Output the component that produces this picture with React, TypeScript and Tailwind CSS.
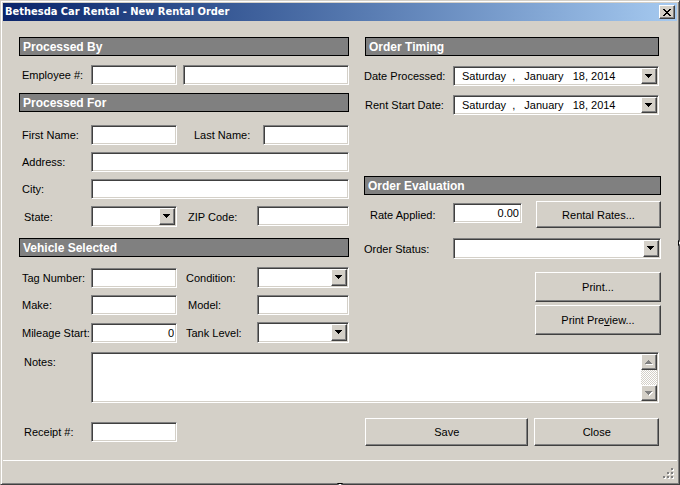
import { useState } from 'react';
import type { InputHTMLAttributes, ButtonHTMLAttributes, ReactNode } from 'react';

const sunken =
  'border border-t-[#808080] border-l-[#808080] border-r-white border-b-white bg-white shadow-[inset_1px_1px_0_#404040,inset_-1px_-1px_0_#d4d0c8]';
const raised =
  'border border-t-white border-l-white border-r-[#404040] border-b-[#404040] bg-[#d4d0c8] shadow-[inset_-1px_-1px_0_#808080]';

function SectionHeader({ children }: { children: ReactNode }) {
  return (
    <h2 className="h-[19px] border border-black bg-[#808080] pl-[3px] text-[12px] leading-[18px] font-bold text-white">
      {children}
    </h2>
  );
}

function Label({ id, className = '', children }: { id: string; className?: string; children: ReactNode }) {
  return (
    <label htmlFor={id} className={`self-center whitespace-nowrap ${className}`}>
      {children}
    </label>
  );
}

function TextField({ className = '', ...props }: InputHTMLAttributes<HTMLInputElement>) {
  return <input type="text" className={`h-5 w-full min-w-0 px-[2px] outline-none ${sunken} ${className}`} {...props} />;
}

function Arrow({ up = false, disabled = false }: { up?: boolean; disabled?: boolean }) {
  return (
    <svg width="8" height="5" viewBox="0 0 8 5" shapeRendering="crispEdges">
      {disabled && <path d={up ? 'M1 4h7v1H1z' : 'M1 1h7v1H7v1H6v1H5v1H4V4H3V3H2V2H1z'} fill="#fff" />}
      <path
        d={up ? 'M3 0h1v1h1v1h1v1h1v1H0V3h1V2h1V1h1z' : 'M0 0h7v1H6v1H5v1H4v1H3V3H2V2H1V1H0z'}
        fill={disabled ? '#808080' : '#000'}
      />
    </svg>
  );
}

function ComboBox({ id, options }: { id: string; options: string[] }) {
  return (
    <div className="relative h-[21px] min-w-0">
      <select id={id} defaultValue="" className={`h-full w-full appearance-none px-[3px] outline-none ${sunken}`}>
        <option value=""></option>
        {options.map((option) => (
          <option key={option}>{option}</option>
        ))}
      </select>
      <span
        className={`pointer-events-none absolute top-[2px] right-[2px] bottom-[2px] flex w-4 items-center justify-center ${raised}`}
      >
        <Arrow />
      </span>
    </div>
  );
}

function DatePicker({ id }: { id: string }) {
  const [date, setDate] = useState('Saturday  ,   January   18, 2014');
  return (
    <div className={`flex h-5 min-w-0 p-px ${sunken}`}>
      <input
        id={id}
        type="text"
        value={date}
        onChange={(e) => setDate(e.target.value)}
        className="min-w-0 flex-1 bg-transparent pl-[7px] outline-none"
      />
      <button type="button" aria-label="Open calendar" className={`flex w-4 items-center justify-center ${raised}`}>
        <Arrow />
      </button>
    </div>
  );
}

function PushButton({ className = '', children, ...props }: ButtonHTMLAttributes<HTMLButtonElement>) {
  return (
    <button type="button" className={`text-center ${raised} ${className}`} {...props}>
      {children}
    </button>
  );
}

export default function App() {
  return (
    <div className="relative flex min-h-screen flex-col border border-t-[#d4d0c8] border-l-[#d4d0c8] border-r-[#404040] border-b-[#404040] bg-[#d4d0c8] p-[2px] font-['Liberation_Sans',sans-serif] text-[11px] leading-[16px] text-black shadow-[inset_1px_1px_0_#fff,inset_-1px_-1px_0_#808080]">
      {/* Title bar */}
      <header className="flex h-[18px] items-center justify-between bg-linear-to-r from-[#0a246a] to-[#a6caf0] pr-[2px] pl-[2px]">
        <h1 className="font-['DejaVu_Sans_Condensed','DejaVu_Sans',sans-serif] text-[11px] leading-[18px] font-bold text-white">
          Bethesda Car Rental - New Rental Order
        </h1>
        <button type="button" aria-label="Close window" className={`flex h-[14px] w-4 items-center justify-center ${raised}`}>
          <svg width="8" height="7" viewBox="0 0 8 7" shapeRendering="crispEdges">
            <path
              d="M0 0h2v1h1v1h2V1h1V0h2v1H7v1H6v1H5v1h1v1h1v1h1v1H6V6H5V5H3v1H2v1H0V6h1V5h1V4h1V3H2V2H1V1H0z"
              fill="#000"
            />
          </svg>
        </button>
      </header>

      <form className="flex-1 px-4 pt-4" onSubmit={(e) => e.preventDefault()}>
        <div className="grid grid-cols-[330fr_297fr] gap-x-[15px]">
          <div>
            <SectionHeader>Processed By</SectionHeader>
            <div className="mt-[9px] grid grid-cols-[72px_86fr_6px_166fr]">
              <Label id="employee" className="pl-[3px]">Employee #:</Label>
              <TextField id="employee" />
              <span />
              <TextField aria-label="Employee name" />
            </div>

            <div className="mt-2">
              <SectionHeader>Processed For</SectionHeader>
            </div>
            <div className="mt-[13px] flex flex-col gap-[7px]">
              <div className="grid grid-cols-[72px_86fr_86px_86fr] items-center">
                <Label id="first" className="pl-[3px]">First Name:</Label>
                <TextField id="first" />
                <Label id="last" className="pl-[17px]">Last Name:</Label>
                <TextField id="last" />
              </div>
              <div className="grid grid-cols-[72px_1fr]">
                <Label id="address" className="pl-[3px]">Address:</Label>
                <TextField id="address" />
              </div>
              <div className="grid grid-cols-[72px_1fr]">
                <Label id="city" className="pl-[3px]">City:</Label>
                <TextField id="city" />
              </div>
              <div className="grid grid-cols-[72px_86fr_80px_92fr]">
                <Label id="state" className="pl-[5px]">State:</Label>
                <ComboBox id="state" options={['DC', 'MD', 'VA']} />
                <Label id="zip" className="pl-[11px]">ZIP Code:</Label>
                <TextField id="zip" />
              </div>
            </div>

            <div className="mt-[11px]">
              <SectionHeader>Vehicle Selected</SectionHeader>
            </div>
            <div className="mt-[10px] grid grid-cols-[72px_86fr_80px_92fr] items-center gap-y-[7px]">
              <Label id="tag" className="pl-[3px]">Tag Number:</Label>
              <TextField id="tag" />
              <Label id="condition" className="pl-[9px]">Condition:</Label>
              <ComboBox id="condition" options={['Excellent', 'Good', 'Needs Repair']} />
              <Label id="make" className="pl-[3px]">Make:</Label>
              <TextField id="make" />
              <Label id="model" className="pl-[11px]">Model:</Label>
              <TextField id="model" />
              <Label id="mileage" className="pl-[3px]">Mileage Start:</Label>
              <TextField id="mileage" defaultValue="0" className="text-right" />
              <Label id="tank" className="pl-[9px]">Tank Level:</Label>
              <ComboBox id="tank" options={['Empty', 'Half', 'Full']} />
            </div>
          </div>

          <div className="flex flex-col">
            <div className="pr-[2px] pl-px">
              <SectionHeader>Order Timing</SectionHeader>
            </div>
            <div className="mt-[10px] grid grid-cols-[89px_1fr] gap-y-[9px] pr-[2px]">
              <Label id="processed">Date Processed:</Label>
              <DatePicker id="processed" />
              <Label id="start" className="pl-px">Rent Start Date:</Label>
              <DatePicker id="start" />
            </div>

            <div className="mt-[61px]">
              <SectionHeader>Order Evaluation</SectionHeader>
            </div>
            <div className="mt-[6px] grid grid-cols-[89px_69fr_14px_125fr]">
              <Label id="rate" className="pl-[6px]">Rate Applied:</Label>
              <TextField id="rate" defaultValue="0.00" className="mt-[2px] text-right" />
              <span />
              <PushButton className="h-[27px]">Rental Rates...</PushButton>
            </div>
            <div className="mt-[10px] grid grid-cols-[89px_1fr]">
              <Label id="status">Order Status:</Label>
              <ComboBox id="status" options={['Car On Road', 'Car Returned', 'Order Reserved']} />
            </div>
            <div className="mt-[13px] ml-auto flex w-[126px] flex-col gap-[3px]">
              <PushButton className="h-[30px]">Print...</PushButton>
              <PushButton className="h-[30px]">
                Print Pre<u>v</u>iew...
              </PushButton>
            </div>
          </div>
        </div>

        <div className="mt-[9px] grid grid-cols-[72px_1fr] pr-[2px]">
          <label htmlFor="notes" className="pt-[2px] pl-[5px]">Notes:</label>
          <div className={`flex h-[51px] p-px ${sunken}`}>
            <textarea id="notes" className="min-w-0 flex-1 resize-none overflow-hidden bg-transparent px-[2px] outline-none" />
            <div className="flex w-4 flex-col justify-between bg-[repeating-conic-gradient(#d4d0c8_0_25%,#fff_0_50%)] bg-size-[2px_2px]">
              <button type="button" aria-label="Scroll up" className={`flex h-4 items-center justify-center ${raised}`}>
                <Arrow up disabled />
              </button>
              <button type="button" aria-label="Scroll down" className={`flex h-4 items-center justify-center ${raised}`}>
                <Arrow disabled />
              </button>
            </div>
          </div>
        </div>

        <div className="mt-[15px] grid grid-cols-[330fr_297fr] items-center gap-x-[15px]">
          <div className="grid grid-cols-[72px_86fr_172fr]">
            <Label id="receipt" className="pl-[5px]">Receipt #:</Label>
            <TextField id="receipt" />
          </div>
          <div className="grid grid-cols-[164fr_125fr] gap-x-[6px] pr-[2px] pl-px">
            <PushButton className="h-7">Save</PushButton>
            <PushButton className="h-7">Close</PushButton>
          </div>
        </div>
      </form>

      {/* Status bar */}
      <footer className="mt-3 flex h-[22px] items-end justify-end border-t border-white pr-[2px] pb-[2px]">
        <svg width="12" height="12" viewBox="0 0 12 12" shapeRendering="crispEdges">
          <path d="M9 1h2v2H9zM5 5h2v2H5zM9 5h2v2H9zM1 9h2v2H1zM5 9h2v2H5zM9 9h2v2H9z" fill="#fff" />
          <path d="M8 0h2v2H8zM4 4h2v2H4zM8 4h2v2H8zM0 8h2v2H0zM4 8h2v2H4zM8 8h2v2H8z" fill="#808080" />
        </svg>
      </footer>

      {/* Resize handles on the window edges */}
      <span className="absolute top-1/2 -right-px h-[5px] w-[2px] -translate-y-1/2 border border-r-0 border-black bg-white" />
      <span className="absolute -bottom-px left-1/2 h-[2px] w-[5px] -translate-x-1/2 border border-b-0 border-black bg-white" />
    </div>
  );
}
